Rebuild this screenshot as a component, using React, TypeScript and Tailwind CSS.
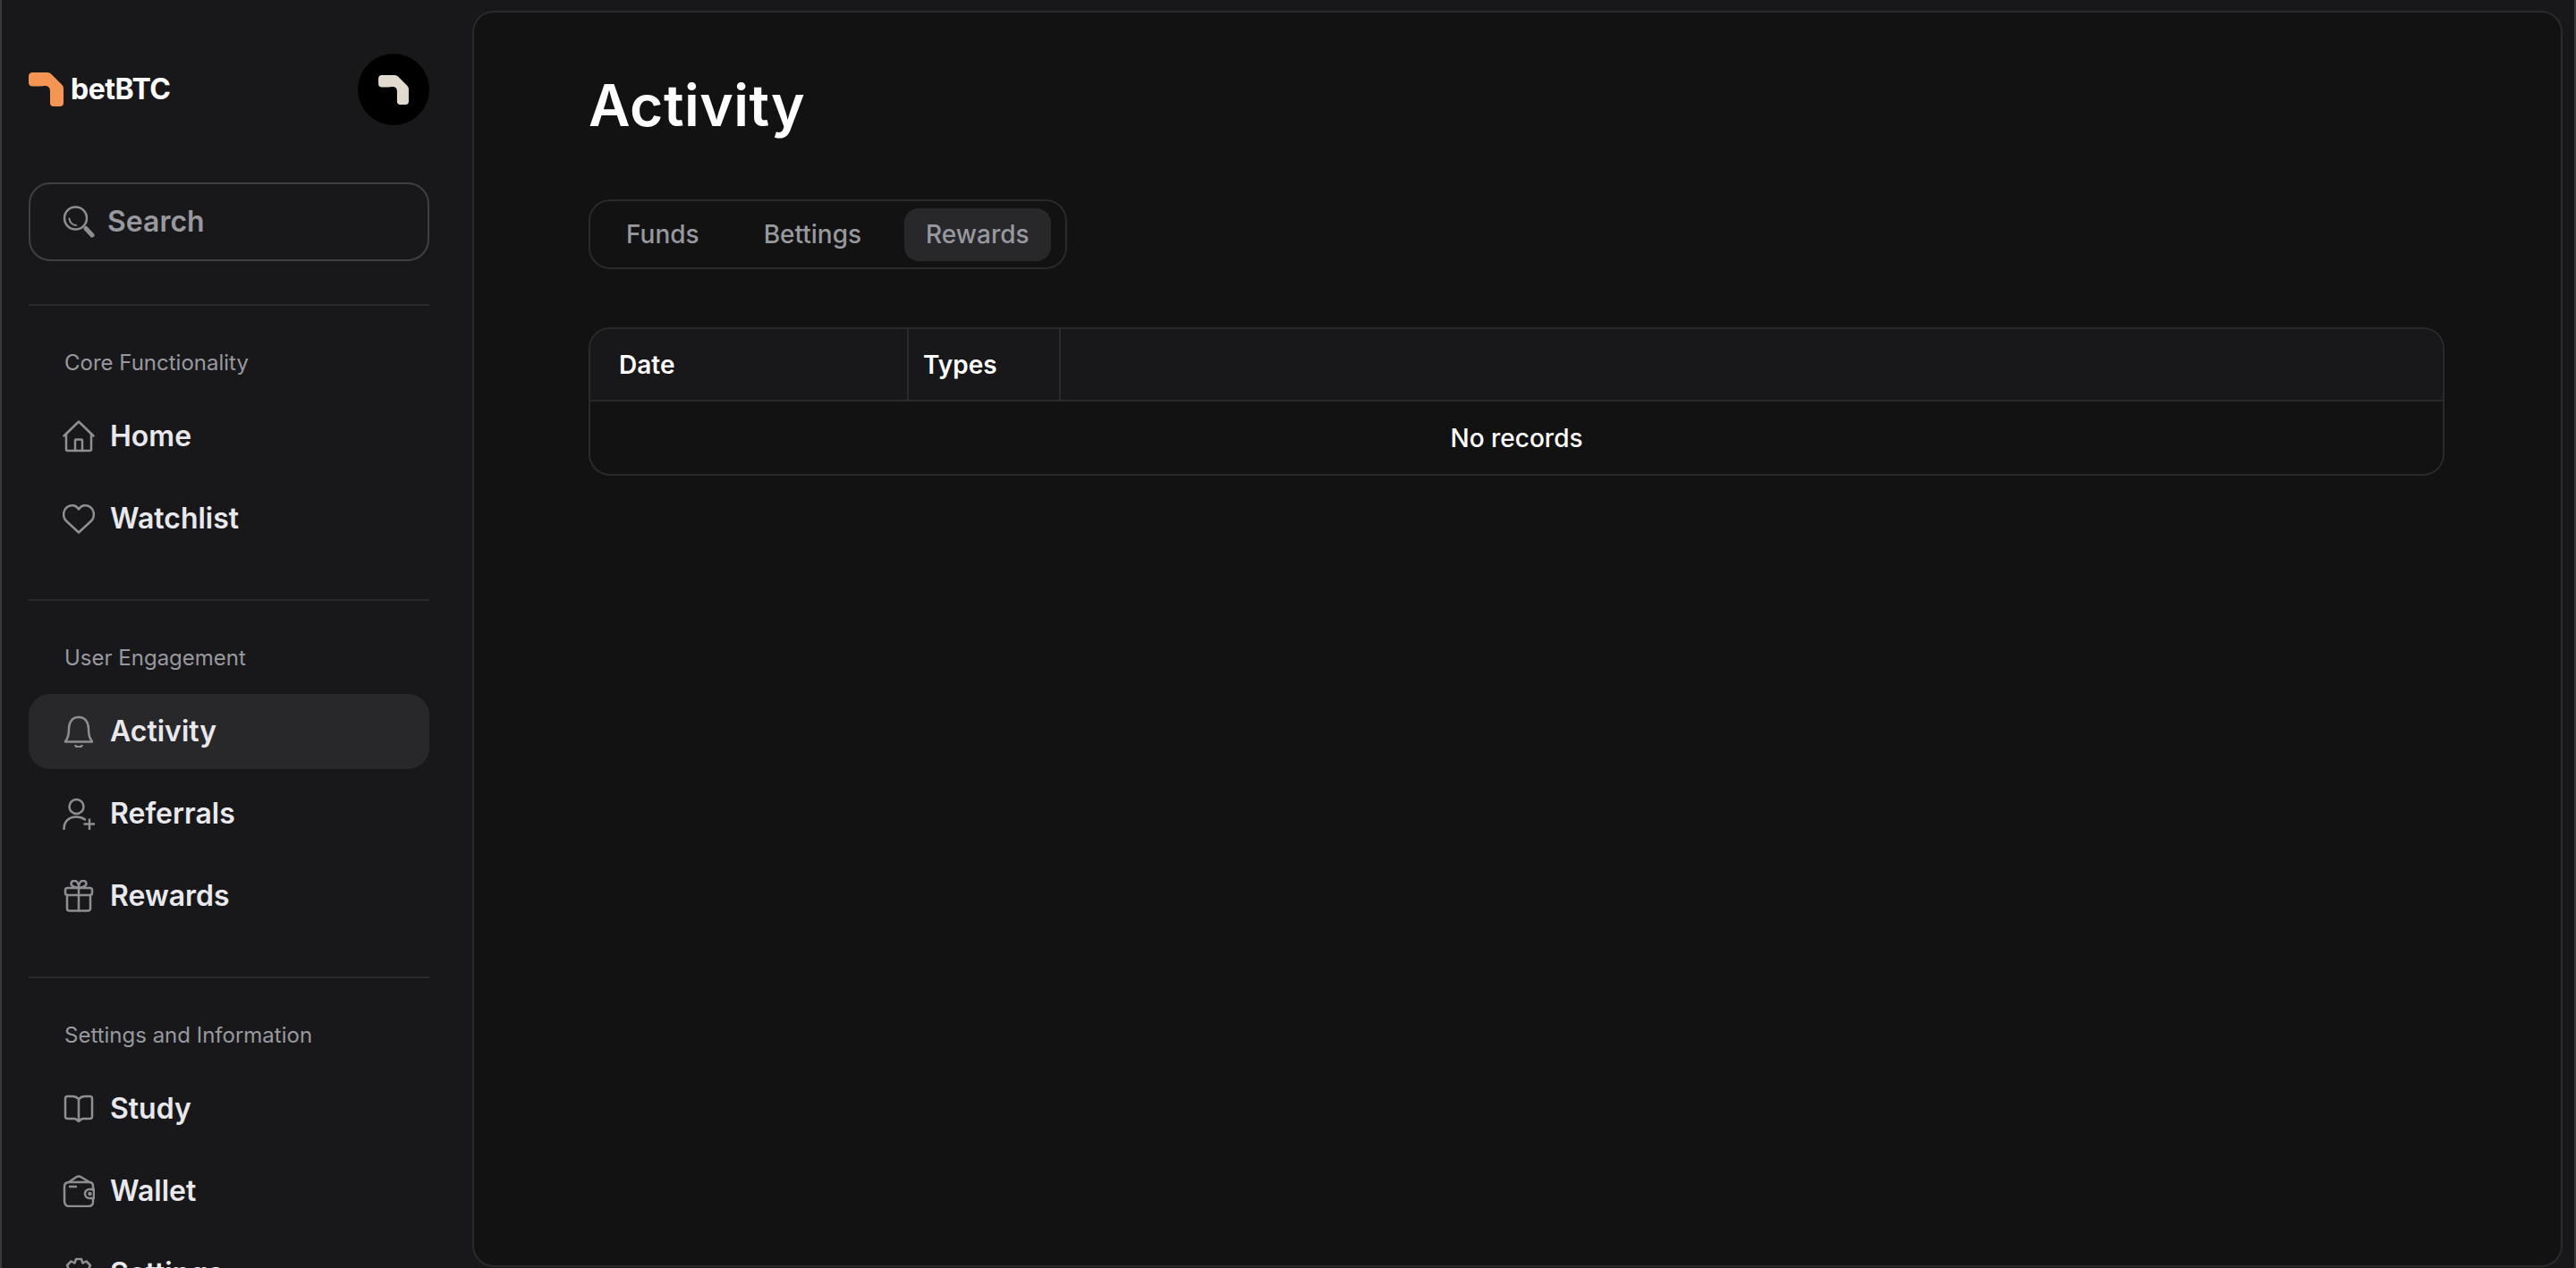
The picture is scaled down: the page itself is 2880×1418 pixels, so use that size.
import React from 'react'

const LOGO_PATH =
  'M4.500 0H21Q23.500 0 25.500 2L37 13.500Q39 15.500 39 18V34Q39 38 35 38H28Q24 38 24 34V21Q24 15.500 19 15Q16.500 14.800 13 15.500H4.500Q0 15.500 0 11V4.500Q0 0 4.500 0Z'

const iconProps = {
  width: 36,
  height: 36,
  viewBox: '0 0 36 36',
  fill: 'none',
  stroke: 'currentColor',
  strokeWidth: 2.500,
  strokeLinecap: 'round' as const,
  strokeLinejoin: 'round' as const,
  className: 'shrink-0 text-[#8e8e93]',
}

const HomeIcon = () => (
  <svg {...iconProps}>
    <path d="M1.500 17.500 18 1.500l16.500 16" />
    <path d="M4 15v17.500a1.500 1.500 0 0 0 1.500 1.500h25a1.500 1.500 0 0 0 1.500-1.500V15" />
    <path d="M14 34V22.500a1 1 0 0 1 1-1h6a1 1 0 0 1 1 1V34" />
  </svg>
)

const HeartIcon = () => (
  <svg {...iconProps}>
    <path d="M18 33.500 4 20.500C-.5 16 .5 8.500 5 5c4.500-3.300 10-2 13 2.500C21 3 26.500 1.700 31 5c4.500 3.500 5.500 11 1 15.500L18 33.500Z" />
  </svg>
)

const BellIcon = () => (
  <svg {...iconProps}>
    <path d="M3 29.500c0-1 1-1.500 2-3.500 1.500-3 2-6 2-11 0-7.500 4-13 11-13s11 5.500 11 13c0 5 .5 8 2 11 1 2 2 2.500 2 3.500H3Z" />
    <path d="M14.500 34c1.500 1.700 5.500 1.700 7 0" />
  </svg>
)

const UserPlusIcon = () => (
  <svg {...iconProps}>
    <circle cx="15.500" cy="10" r="8" />
    <path d="M1.500 35c0-8 5-13.500 14-13.500 4 0 7 1 9.500 3" />
    <path d="M30 24.500v10.500M24.500 29.500h11" />
  </svg>
)

const GiftIcon = () => (
  <svg {...iconProps}>
    <rect x="3" y="9" width="30" height="8" rx="2.500" />
    <path d="M5 17v15a2.500 2.500 0 0 0 2.500 2.500h21A2.500 2.500 0 0 0 31 32V17" />
    <path d="M18 9v25.500" />
    <path d="M18 9c-3-.5-8-1-8.500-4.500C9.500 2 11.500 1 13.500 1 16.500 1 18 5 18 9Zm0 0c3-.5 8-1 8.500-4.500C26.500 2 24.500 1 22.500 1 19.500 1 18 5 18 9Z" />
  </svg>
)

const BookIcon = () => (
  <svg {...iconProps}>
    <path d="M18 7c-2-2-4-3-7-3H5.500A2.500 2.500 0 0 0 3 6.500v20A2.500 2.500 0 0 0 5.500 29H13c2 0 3 1 5 3 2-2 3-3 5-3h7.500a2.500 2.500 0 0 0 2.500-2.500v-20A2.500 2.500 0 0 0 30.500 4H25c-3 0-5 1-7 3Zm0 0v25" />
  </svg>
)

const WalletIcon = () => (
  <svg {...iconProps}>
    <path d="M34 17v-4.500C34 9.500 32 8 29.500 8h-22C4 8 2 10 2 13v16c0 3.500 2 6 5.500 6h21c3 0 5.500-1.500 5.500-5v-4" />
    <path d="M7 8l8-5.500c2-1.300 4-1.300 6 0L30 8" />
    <path d="M8 13h7" />
    <path d="M35 16h-5a5 5 0 0 0 0 10h5V16Z" />
    <circle cx="30.500" cy="21" r="1" />
  </svg>
)

const SettingsIcon = () => (
  <svg {...iconProps}>
    <path d="M15 2h6l1.500 4.500 4-2 4.500 4.500-2 4L34 14.500v7l-4.500 1.500 2 4-4.500 4.500-4-2L21 34h-6l-1.500-4.500-4 2L5 27l2-4L2 21.500v-7L7 13 5 9l4.500-4.500 4 2L15 2Z" />
    <circle cx="18" cy="18" r="5" />
  </svg>
)

const SearchIcon = () => (
  <svg width="36" height="36" viewBox="0 0 36 36" fill="none" stroke="#8e8e93" strokeLinecap="round" className="shrink-0">
    <circle cx="14.500" cy="14" r="12.500" strokeWidth="2.500" />
    <path d="M7.500 14.500c.5 4 3.500 7 7.500 7.500" strokeWidth="2" />
    <path d="M26 25.500 33 33" strokeWidth="5" />
  </svg>
)

const sections = [
  {
    title: 'Core Functionality',
    items: [
      { label: 'Home', icon: <HomeIcon /> },
      { label: 'Watchlist', icon: <HeartIcon /> },
    ],
  },
  {
    title: 'User Engagement',
    items: [
      { label: 'Activity', icon: <BellIcon />, active: true },
      { label: 'Referrals', icon: <UserPlusIcon /> },
      { label: 'Rewards', icon: <GiftIcon /> },
    ],
  },
  {
    title: 'Settings and Information',
    items: [
      { label: 'Study', icon: <BookIcon /> },
      { label: 'Wallet', icon: <WalletIcon /> },
      { label: 'Settings', icon: <SettingsIcon /> },
    ],
  },
]

const tabs = ['Funds', 'Bettings', 'Rewards']

const App: React.FC = () => {
  return (
    <div className="flex h-[1418px] w-full overflow-hidden border-x-2 border-[#3a3a3c] bg-[#18181b] font-['Inter',sans-serif]">
      {/* Sidebar */}
      <aside className="w-[526px] shrink-0 pl-[30px] pr-[48px] pt-[60px]">
        <div className="flex h-20 items-center justify-between">
          <div className="flex items-center gap-[8px]">
            <svg width="39" height="38" viewBox="0 0 39 38" className="shrink-0">
              <path d={LOGO_PATH} fill="#f59553" />
            </svg>
            <span className="text-[32px] font-bold leading-none tracking-[-0.5px] text-white">betBTC</span>
          </div>
          <div className="flex h-20 w-20 items-center justify-center rounded-full bg-black">
            <svg width="34" height="33" viewBox="0 0 39 38">
              <path d={LOGO_PATH} fill="#e0dacf" />
            </svg>
          </div>
        </div>

        <div className="mt-16 flex h-[88px] items-center gap-[14px] rounded-[24px] border-2 border-[#3f3f44] pl-[36px]">
          <SearchIcon />
          <span className="text-[32px] font-[570] text-[#98989f]">Search</span>
        </div>

        <div className="mt-12">
          {sections.map((section) => (
            <div key={section.title} className="border-t-2 border-[#2a2a2d] pb-12 pt-[46px]">
              <div className="pl-[40px] text-[24px] leading-9 text-[#98989f]">{section.title}</div>
              <div className="mt-[22px] flex flex-col gap-2">
                {section.items.map((item) => (
                  <div
                    key={item.label}
                    className={`flex h-[84px] items-center gap-[17px] rounded-[24px] pl-[38px] ${
                      item.active ? 'bg-[#28282b]' : ''
                    }`}
                  >
                    {item.icon}
                    <span className="text-[32px] font-[570] text-[#e8e8ed]">{item.label}</span>
                  </div>
                ))}
              </div>
            </div>
          ))}
        </div>
      </aside>

      {/* Main panel */}
      <main className="mb-px mr-[13px] mt-3 min-w-0 flex-1 rounded-[24px] border-2 border-[#2a2a2d] bg-[#121212] pl-[128px] pr-[130px] pt-[68px]">
        <h1 className="text-[64px] font-semibold leading-[72px] tracking-[0.5px] text-white">Activity</h1>

        <div className="mt-[69px] flex h-[78px] w-fit items-center gap-[24px] rounded-[24px] border-2 border-[#2a2a2d] px-[16px]">
          {tabs.map((tab) => (
            <div
              key={tab}
              className={`flex h-[59px] items-center rounded-[16px] px-[24px] text-[28px] font-[550] text-[#98989f] ${
                tab === 'Rewards' ? 'bg-[#28282b]' : ''
              }`}
            >
              {tab}
            </div>
          ))}
        </div>

        <div className="mt-[65px] overflow-hidden rounded-[24px] border-2 border-[#2a2a2d]">
          <div className="grid h-[81px] grid-cols-[356px_170px_1fr] border-b-2 border-[#2a2a2d] bg-[#18181b] text-[28px] font-semibold text-white">
            <div className="flex items-center border-r-2 border-[#2a2a2d] pl-[32px]">Date</div>
            <div className="flex items-center border-r-2 border-[#2a2a2d] pl-[16px]">Types</div>
            <div />
          </div>
          <div className="flex h-[81px] items-center justify-center text-[28px] font-medium text-white">No records</div>
        </div>
      </main>
    </div>
  )
}

export default App
